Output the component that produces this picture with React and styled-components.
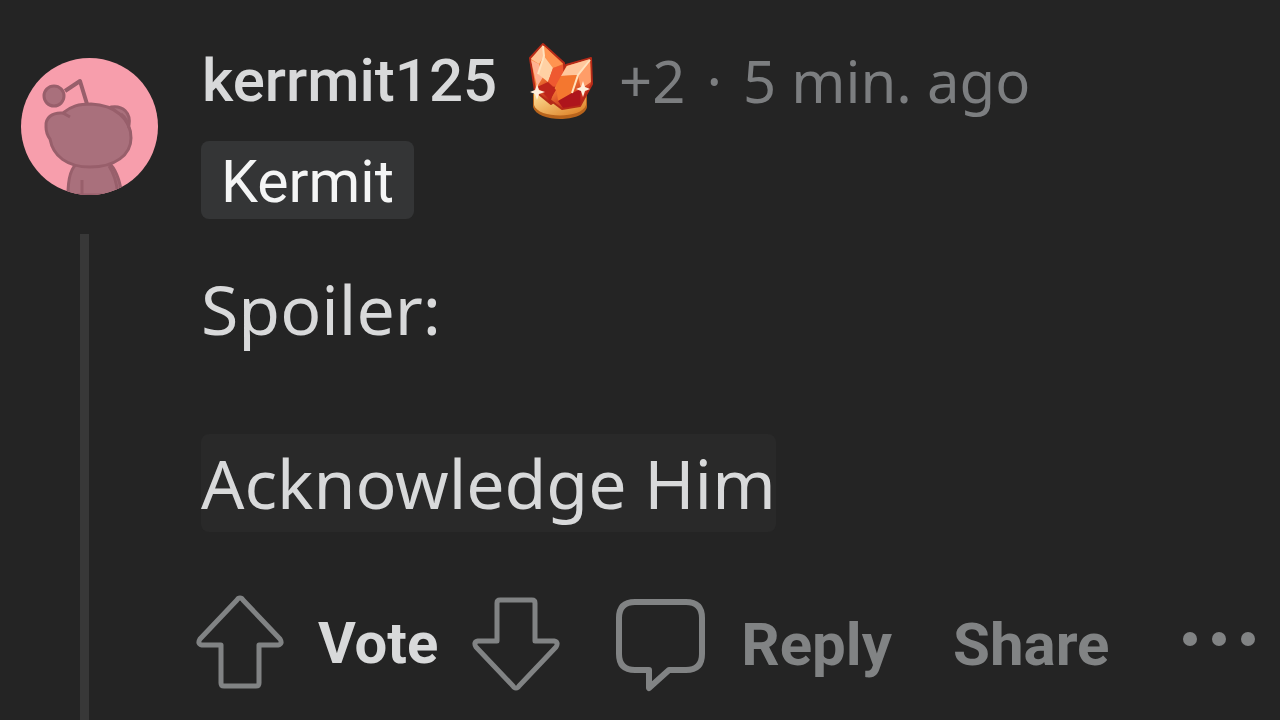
import React from 'react';
import styled, { createGlobalStyle } from 'styled-components';

const GlobalStyle = createGlobalStyle`
  * {
    box-sizing: border-box;
  }

  body {
    margin: 0;
    background-color: #242424;
    color: #d8d9da;
    font-family: 'Noto Sans', sans-serif;
  }
`;

const Comment = styled.article`
  display: flex;
  min-height: 100vh;
  overflow: hidden;
`;

const Rail = styled.div`
  flex: none;
  width: 196px;
  padding: 58px 0 0 21px;
  display: flex;
  flex-direction: column;

  & > svg {
    display: block;
    border-radius: 50%;
  }
`;

const ThreadLine = styled.div`
  flex: 1;
  width: 9px;
  margin: 39px 0 0 59px;
  background-color: #383838;
`;

const Content = styled.div`
  flex: 1;
  padding-top: 40px;
  white-space: nowrap;
`;

const Header = styled.header`
  display: flex;
  align-items: center;
  height: 82px;
  padding-left: 6px;
  font-size: 58px;
  line-height: 80px;
  color: #7c7e80;

  & > svg {
    flex: none;
    margin: 0 20px 0 26px;
  }
`;

const UserLink = styled.a`
  font-family: Roboto, sans-serif;
  font-size: 60px;
  font-weight: 500;
  color: #d8d9da;
  text-decoration: none;
`;

const Dot = styled.span`
  margin: 0 21px;
`;

const Flair = styled.span`
  display: block;
  width: fit-content;
  margin: 19px 0 0 5px;
  padding: 3px 20px 0;
  border-radius: 8px;
  background-color: #343536;
  color: #f4f5f5;
  font-family: Roboto, sans-serif;
  font-size: 59px;
  line-height: 75px;
`;

const Body = styled.div`
  padding: 41px 0 0 5px;
  font-size: 68px;
  line-height: 98px;

  p {
    margin: 0 0 76px;
  }

  p:last-child {
    margin: 0;
  }
`;

const Spoiler = styled.span`
  display: inline-block;
  border-radius: 8px;
  background-color: #292929;
`;

const Actions = styled.footer`
  display: flex;
  align-items: center;
  height: 104px;
  margin-top: 59px;
`;

const Votes = styled.div`
  display: flex;
  align-items: center;
  gap: 34px;
  margin-right: 55px;
  font-family: Roboto, sans-serif;
  font-size: 58px;
  font-weight: 700;
`;

const ActionButton = styled.button`
  display: flex;
  align-items: center;
  gap: 34px;
  margin: 0 ${(props) => props.$space || 0}px 0 0;
  padding: ${(props) => (props.$space ? 4 : 0)}px 0 0;
  border: 0;
  background: none;
  color: #818384;
  font-family: Roboto, sans-serif;
  font-size: 60px;
  font-weight: 700;
  line-height: 80px;
  cursor: pointer;

  & > svg {
    display: block;
    flex: none;
  }
`;

const Avatar = () => (
  <svg width="137" height="137" viewBox="0 0 137 137" role="img" aria-label="avatar">
    <rect width="137" height="137" fill="#f79eac" />
    <g fill="#a9707c" stroke="#985f6b" strokeWidth="3" strokeLinejoin="round">
      <path d="M47 137C47 121 50 109 57 105H88C96 112 99 124 101 137Z" />
      <path d="M61 137V122M88 108C94 117 96 127 97 137" fill="none" />
      <path d="M44 33L59 23L66 46" fill="none" strokeWidth="4" />
      <circle cx="33" cy="38" r="10" />
      <path d="M90 49C102 47 110 55 108 67Z" />
      <path d="M25 69C24 60 31 54 42 55C50 48 58 46 70 46C94 47 110 61 110 80C110 97 94 109 69 109C46 109 32 98 29 81C26 77 25 73 25 69Z" />
      <path d="M42 55L49 59M100 56C105 60 107 64 108 70" fill="none" />
    </g>
  </svg>
);

const CrystalAward = () => (
  <svg width="76" height="84" viewBox="0 0 76 84" role="img" aria-label="award">
    <defs>
      <linearGradient id="crystal" x1="0" y1="0" x2="0.5" y2="1">
        <stop offset="0" stopColor="#ff9a50" />
        <stop offset="0.55" stopColor="#f47b35" />
        <stop offset="1" stopColor="#b81c18" />
      </linearGradient>
      <linearGradient id="sand" x1="0" y1="0" x2="1" y2="1">
        <stop offset="0" stopColor="#ffe29a" />
        <stop offset="1" stopColor="#dc7a1d" />
      </linearGradient>
    </defs>
    <path d="M10 55H64V68C61 84 14 84 10 68Z" fill="#b8641c" />
    <path d="M11 53C18 58 54 58 63 53V66C59 80 15 80 11 66Z" fill="url(#sand)" />
    <g stroke="#b52a18" strokeWidth="2" strokeLinejoin="round">
      <path d="M20 5L7 19L12 52L28 65L42 55L41 24Z" fill="url(#crystal)" />
      <path d="M68 19L43 26L32 45L27 61L39 70L57 67L69 45Z" fill="url(#crystal)" />
    </g>
    <path d="M20 6L8 20L16 25L21 17Z" fill="#ffc295" />
    <path d="M8 21L14 48L20 38L16 25Z" fill="#ffb291" />
    <path d="M21 7L40 25L30 29L22 18Z" fill="#ff9450" />
    <path d="M21 17L30 29L25 43L15 35Z" fill="#ffd1a4" />
    <path d="M40 26L41 42L31 48L25 43L30 29Z" fill="#ef5930" />
    <path d="M14 48L25 43L33 51L27 61Z" fill="#bd241b" />
    <path d="M67 20L44 27L38 37L55 36Z" fill="#ffc79c" />
    <path d="M67 21L68 43L58 50L55 36Z" fill="#ff9d68" />
    <path d="M38 37L55 36L49 54L35 62L33 46Z" fill="#f4772f" />
    <path d="M49 54L58 50L57 66L40 69L35 62Z" fill="#ae151c" />
    <path d="M20 7L21 17L15 35M67 21L55 36L49 54" fill="none" stroke="#ffe2bd" strokeWidth="2" />
    <path d="M14 45L16 51L22 53L16 55L14 61L12 55L7 53L12 51ZM60 42L62 48L67 50L62 52L60 58L58 52L53 50L58 48Z" fill="#fff0dc" />
  </svg>
);

const VoteArrow = ({ down }) => (
  <svg width="88" height="98" viewBox="0 0 88 98" fill="none" stroke="#818384" strokeWidth="5" strokeLinejoin="round">
    <path
      d="M44 4Q46 4 47 6L84 45Q87 50 82 51H63V89Q63 92 60 92H28Q25 92 25 89V51H6Q1 50 4 45L41 6Q42 4 44 4Z"
      transform={down ? 'rotate(180 44 49)' : undefined}
    />
  </svg>
);

const CommentIcon = () => (
  <svg width="92" height="98" viewBox="0 0 92 98" fill="none" stroke="#818384" strokeWidth="6" strokeLinejoin="round">
    <path d="M20 6H71Q87 6 87 22V58Q87 74 71 74H54L34 92V74H20Q4 74 4 58V22Q4 6 20 6Z" />
  </svg>
);

const MoreIcon = () => (
  <svg width="76" height="24" viewBox="0 0 76 24" fill="#818384">
    <circle cx="8" cy="8" r="7" />
    <circle cx="37" cy="8" r="7" />
    <circle cx="66" cy="8" r="7" />
  </svg>
);

const App = () => {
  return (
    <>
      <GlobalStyle />
      <Comment>
        <Rail>
          <Avatar />
          <ThreadLine />
        </Rail>
        <Content>
          <Header>
            <UserLink href="#user">kerrmit125</UserLink>
            <CrystalAward />
            <span>+2</span>
            <Dot>·</Dot>
            <time>5 min. ago</time>
          </Header>
          <Flair>Kermit</Flair>
          <Body>
            <p>Spoiler:</p>
            <p>
              <Spoiler>Acknowledge Him</Spoiler>
            </p>
          </Body>
          <Actions>
            <Votes>
              <ActionButton aria-label="upvote">
                <VoteArrow />
              </ActionButton>
              <span>Vote</span>
              <ActionButton aria-label="downvote">
                <VoteArrow down />
              </ActionButton>
            </Votes>
            <ActionButton $space={61}>
              <CommentIcon />
              Reply
            </ActionButton>
            <ActionButton $space={73}>Share</ActionButton>
            <ActionButton aria-label="more options">
              <MoreIcon />
            </ActionButton>
          </Actions>
        </Content>
      </Comment>
    </>
  );
};

export default App;
